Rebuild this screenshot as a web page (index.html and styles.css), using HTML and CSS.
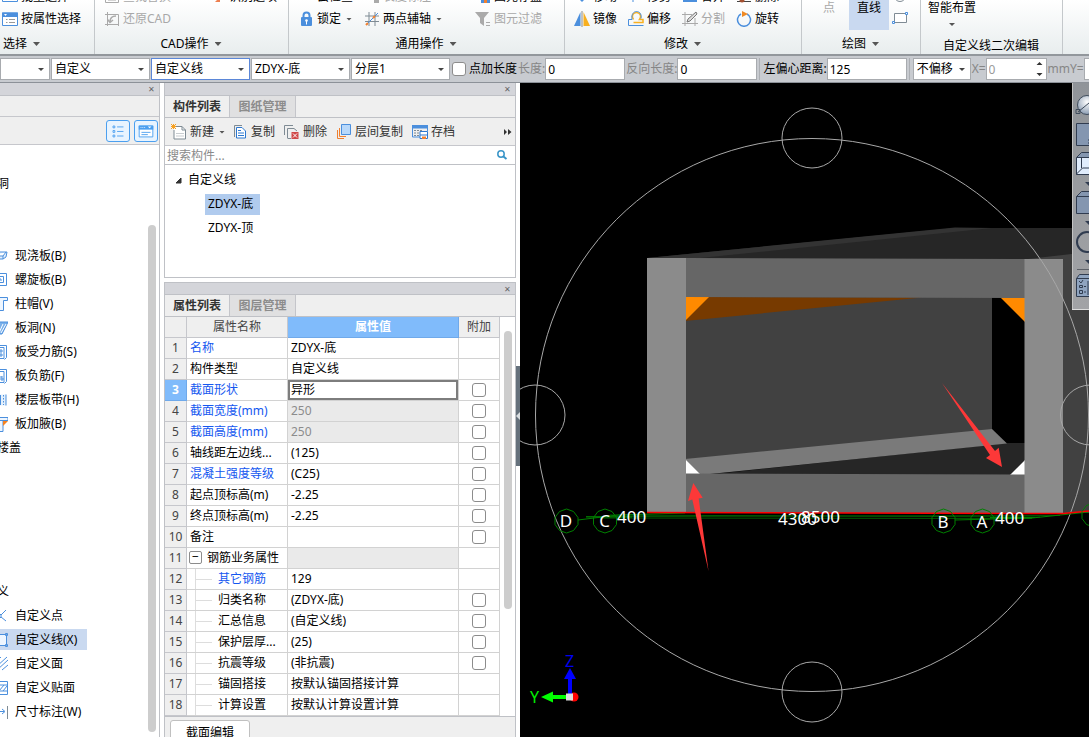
FILE: index.html
```html
<!DOCTYPE html>
<html lang="zh-CN">
<head>
<meta charset="utf-8">
<title>自定义线</title>
<link rel="stylesheet" href="styles.css">
</head>
<body>
<div class="app">
<header class="ribbon">
  <section class="group g-select">
    <div class="tools">
      <button><svg class="ic" viewBox="0 0 16 16"><path d="M.5 1.500h15v11H.5z" fill="#fff" stroke="#4b8fdd"/><path d="M0 1h16v4H0z" fill="#4b8fdd"/></svg>批量选择</button>
      <button><svg class="ic" viewBox="0 0 16 16"><path d="M.5 2h15v12.500H.5z" fill="#fff" stroke="#4b8fdd"/><path d="M0 1.500h16V6H0z" fill="#4b8fdd"/><path d="M2 3h3L3.500 5z" fill="#fff"/><path d="M4 8.500h1.500M7 8.500h6M4 11.500h1.500M7 11.500h6" stroke="#999"/></svg>按属性选择</button>
    </div>
    <button class="caption">选择<i class="arrow"></i></button>
  </section>
  <section class="group g-cad">
    <div class="tools">
      <button disabled><svg class="ic" viewBox="0 0 16 16"><path d="M1.500 2.500h13v11h-13zM4 11h8" fill="none" stroke="#aaa"/></svg>查找替换</button>
      <button><svg class="ic" viewBox="0 0 16 16"><path d="M5 13l5-5v5z" fill="#ee8050"/></svg>识别选项</button>
      <button disabled><svg class="ic" viewBox="0 0 16 16"><path d="M3.500 1v14M1 3.500h13.500V15M1 13.500h14" fill="none" stroke="#aaa"/><path d="M12 5c-4 0-6 2-6 6M3.500 8.500L6 11.500l3-2.500" fill="none" stroke="#aaa" stroke-width="1.500"/></svg>还原CAD</button>
    </div>
    <button class="caption">CAD操作<i class="arrow"></i></button>
  </section>
  <section class="group g-common">
    <div class="tools">
      <button><svg class="ic" viewBox="0 0 16 16"></svg>云检查</button>
      <button disabled><svg class="ic" viewBox="0 0 16 16"><path d="M10 11h5v3h-5z" fill="#aaa"/></svg>长度标注</button>
      <button><svg class="ic" viewBox="0 0 16 16"><path d="M6 2h9v12H6z" fill="#4b8fdd"/><path d="M9 10h3v4H9z" fill="#f08030"/></svg>图元存盘</button>
      <button><svg class="ic" viewBox="0 0 16 16"><path d="M5.500 7V4.500a3 3 0 0 1 6 0V7" fill="none" stroke="#4b8fdd" stroke-width="2"/><rect x="3" y="6" width="11" height="9" rx="1" fill="#4b8fdd"/><circle cx="8.500" cy="9.500" r="1.300" fill="#fff"/><path d="M8 9.500h1v4H8z" fill="#fff"/></svg>锁定<i class="arrow s"></i></button>
      <button><svg class="ic" viewBox="0 0 16 16"><path d="M5 1v14M11 1v14M1 5h14M1 10.500h14" stroke="#7f8b94"/><path d="M2 14L14 2" stroke="#4b8fdd"/><path d="M2 14l2-2M9 7l2-2" stroke="#f08030" stroke-width="2"/></svg>两点辅轴<i class="arrow s"></i></button>
      <button disabled><svg class="ic" viewBox="0 0 16 16"><path d="M0 1h14L9 7v8l-4-3V7z" fill="#aaa"/><path d="M11 11.500h4M11 14.500h4" stroke="#aaa"/></svg>图元过滤</button>
    </div>
    <button class="caption">通用操作<i class="arrow"></i></button>
  </section>
  <section class="group g-modify">
    <div class="tools">
      <button><svg class="ic" viewBox="0 0 16 16"><path d="M4 9h8l-4 4z" fill="#4b8fdd"/></svg>移动</button>
      <button><svg class="ic" viewBox="0 0 16 16"><path d="M5 8v5" stroke="#4b8fdd"/></svg>修剪</button>
      <button><svg class="ic" viewBox="0 0 16 16"><path d="M1 6h14v7H1z" fill="#4b8fdd"/></svg>合并</button>
      <button><svg class="ic" viewBox="0 0 16 16"><path d="M1 12.500h14" stroke="#444"/><circle cx="6" cy="11" r="2.500" fill="#a35030"/></svg>删除</button>
      <button><svg class="ic" viewBox="0 0 16 16"><path d="M6.500 1v14H0z" fill="#4b8fdd"/><path d="M9.500 1v14H16z" fill="#f8b020"/><path d="M8 0v16" stroke="#8a8a8a"/></svg>镜像</button>
      <button><svg class="ic" viewBox="0 0 16 16"><path d="M5.500 8.500C3 5 5 1.500 8.500 1.500S14 5 11.500 8.500h3.500v3H5.500" fill="none" stroke="#f8b020" stroke-width="1.500"/><path d="M4 8.500C3 3 6 .5 8.500.5S14 2.500 13 7.500M4 8.500H.5v6H15.500" fill="none" stroke="#4b8fdd"/></svg>偏移</button>
      <button disabled><svg class="ic" viewBox="0 0 16 16"><path d="M3 1v14M13 7v8M0 3.500h10M0 12.500h16" stroke="#aaa"/><path d="M5 11l1-3 8-7 1 2-7 7z" fill="#ddd" stroke="#777"/></svg>分割</button>
      <button><svg class="ic" viewBox="0 0 16 16"><path d="M5 3a6.500 6.500 0 1 0 6 0" fill="none" stroke="#4b8fdd" stroke-width="1.500"/><path d="M6 0v6l6-3z" fill="#f08a24"/></svg>旋转</button>
    </div>
    <button class="caption">修改<i class="arrow"></i></button>
  </section>
  <section class="group g-draw">
    <div class="shapes">
      <button disabled class="shape">点</button>
      <button class="shape on">直线</button>
      <button class="outline" aria-label="矩形"><svg viewBox="0 0 18 30"><circle cx="9" cy="-4" r="5.500" fill="none" stroke="#7f8b94"/><path d="M3.500 13.500h12v9h-12z" fill="#fff" stroke="#7f8b94"/><path d="M1.500 21.500h2v2h-2zM14.500 12.500h2v2h-2z" fill="#fff" stroke="#4b8fdd"/></svg></button>
    </div>
    <button class="caption">绘图<i class="arrow"></i></button>
  </section>
  <section class="group g-smart">
    <button class="smart">智能布置<i class="arrow s"></i></button>
    <div class="caption low">自定义线二次编辑</div>
  </section>
</header>

<form class="options">
  <select class="w50" aria-label="楼层"><option></option></select>
  <select class="w100" aria-label="构件类别"><option>自定义</option></select>
  <select class="w100 focus" aria-label="构件类型"><option>自定义线</option></select>
  <select class="w100" aria-label="构件"><option>ZDYX-底</option></select>
  <select class="w100" aria-label="分层"><option>分层1</option></select>
  <label class="check"><input type="checkbox">点加长度</label>
  <label class="dim">长度:<input type="text" value="0"></label>
  <label class="dim">反向长度:<input type="text" value="0"></label>
  <label class="sep">左偏心距离:<input type="text" value="125"></label>
  <span class="sep"><select class="w58" aria-label="偏移方式"><option>不偏移</option></select></span>
  <label class="dim">X=<span class="spin"><input type="text" value="0" disabled><svg viewBox="0 0 7 16"><path d="M0.500 4L3.500 1l3 3zM.5 12l3 3 3-3z" fill="#333"/></svg></span></label>
  <label class="dim mm">mmY=<input type="text"></label>
</form>

<main class="work">
<aside class="panel nav">
  <div class="title"><button aria-label="关闭">✕</button></div>
  <div class="blank"></div>
  <div class="views">
    <button aria-label="列表"><svg viewBox="0 0 24 22"><path d="M6.500 5.500h2v2h-2zM6.500 10.500h2v2h-2zM6.500 15.500h2v2h-2z" fill="none" stroke="#4b9fef"/><path d="M11 6.500h7M11 11.500h7M11 16.500h7" stroke="#4b9fef"/></svg></button>
    <button aria-label="图标"><svg viewBox="0 0 24 22"><path d="M4.500 5.500h15v12h-15z" fill="#fff" stroke="#4b9fef"/><path d="M4 5h16v4.500H4z" fill="#4b9fef"/><path d="M6 6.500h1v1H6zM8 6.500h1v1H8zM10 6.500h1v1h-1zM14 6h4l-2 2z" fill="#fff"/><path d="M7 12.500h10M7 15h7" stroke="#4b9fef"/></svg></button>
  </div>
  <div class="scroll">
    <ul class="modules">
      <li class="cat">门窗洞</li>
      <li class="after2"><svg class="ic" viewBox="0 0 16 16"><path d="M0 9l5-5h10l-1 5-3 2H0zM0 8h11l3-4M11 8v3" fill="#e4f0fc" stroke="#4b8fdd"/></svg>现浇板(B)</li>
      <li><svg class="ic" viewBox="0 0 16 16"><path d="M1 1.500h13.500v12H1M4 4.500h7.500v6H6V7h3v2" fill="none" stroke="#4b8fdd"/></svg>螺旋板(B)</li>
      <li><svg class="ic" viewBox="0 0 16 16"><path d="M1 1.500h14.500v3h-4v10h-6v-10H1z" fill="#eef6ff" stroke="#4b8fdd"/></svg>柱帽(V)</li>
      <li><svg class="ic" viewBox="0 0 16 16"><path d="M3 2h13l-6 12H5z" fill="#7ab0ea" stroke="#4b8fdd"/><path d="M11 4l-4 9M14 4l-5 9" stroke="#fff"/></svg>板洞(N)</li>
      <li><svg class="ic" viewBox="0 0 16 16"><path d="M1 3.500h11v11H1M3 1.500h11.500v12l-2 2M5 5v8M9 5v8M3 7h8M3 11h8" fill="none" stroke="#4b8fdd"/></svg>板受力筋(S)</li>
      <li><svg class="ic" viewBox="0 0 16 16"><path d="M1 3.500h11v11H1M3 1.500h11.500v12l-2 2M7 5v4M10 8v5M4 9h6M5 11h7" fill="none" stroke="#4b8fdd"/></svg>板负筋(F)</li>
      <li><svg class="ic" viewBox="0 0 16 16"><path d="M6 2.500h8v11H6z" fill="#e4f0fc"/><path d="M8.500 3v10M14 2.500v11" stroke="#4b8fdd"/><path d="M11.500 3v10" stroke="#4b8fdd" stroke-dasharray="1.500 1.500"/></svg>楼层板带(H)</li>
      <li><svg class="ic" viewBox="0 0 16 16"><path d="M1 1.500h15v3H1zM6 4.500h5v11H6z" fill="#eef6ff" stroke="#4b8fdd"/><path d="M11 5h5l-5 5z" fill="#f58220"/></svg>板加腋(B)</li>
      <li class="cat">空心楼盖</li>
      <li class="cat after5">自定义</li>
      <li><svg class="ic" viewBox="0 0 16 16"><path d="M14 2L9 7M9 9l5 4M6 6.500h3v3H6z" fill="none" stroke="#4b8fdd"/></svg>自定义点</li>
      <li class="on"><svg class="ic" viewBox="0 0 16 16"><path d="M5 2.500h9.500v11H5M13.500 1.500h2v2h-2zM13.500 12.500h2v2h-2z" fill="#eef6ff" stroke="#4b8fdd"/></svg>自定义线(X)</li>
      <li><svg class="ic" viewBox="0 0 16 16"><path d="M4 6l5-5M4 11L15 1M5 14L16 4M10 14l6-5" stroke="#4b8fdd"/></svg>自定义面</li>
      <li><svg class="ic" viewBox="0 0 16 16"><path d="M3 1.500h12.500v13H3M3 5h12M3 11h12M7 11l5-6M11 11l4-5" fill="none" stroke="#4b8fdd"/></svg>自定义贴面</li>
      <li><svg class="ic" viewBox="0 0 16 16"><path d="M3 7.500h9M10 5l3 2.500L10 10" fill="none" stroke="#4b8fdd"/><path d="M15.500 2v13" stroke="#7f8b94"/></svg>尺寸标注(W)</li>
    </ul>
    <div class="bar"></div>
  </div>
</aside>

<div class="stack">
<section class="panel list">
  <div class="title"><button aria-label="关闭">✕</button></div>
  <div class="tabs"><button class="on">构件列表</button><button>图纸管理</button></div>
  <div class="toolbar">
    <button><svg class="ic" viewBox="0 0 16 16"><path d="M5 2.500h6l3.500 3.500v9H3V6" fill="#fff" stroke="#7f8b94"/><path d="M11 2.500V6h3.500" fill="none" stroke="#7f8b94"/><path d="M5 9.500h8M5 12h8" stroke="#c8ccd0"/><path d="M0 0l5 5M5 0L0 5M2.500 0v5M0 2.500h5" stroke="#f8a020"/></svg>新建<i class="arrow s"></i></button>
    <button><svg class="ic" viewBox="0 0 16 16"><path d="M2.500 13V1.500H10" fill="none" stroke="#7f8b94"/><path d="M4.500 3.500H10L13.500 7v7h-9z" fill="#fff" stroke="#2d78d0"/><path d="M6 6.500h3M6 9h6M6 11.500h6" stroke="#2d78d0"/></svg>复制</button>
    <button><svg class="ic" viewBox="0 0 16 16"><path d="M.5 11V1.500H9M3.500 14V4.500H10L13 7" fill="none" stroke="#7f8b94"/><path d="M3.500 14.500H7" stroke="#7f8b94"/><path d="M7.500 8h7v7h-7z" fill="#d04848"/><path d="M9 9.500l4 4M13 9.500l-4 4" stroke="#fff"/></svg>删除</button>
    <button><svg class="ic" viewBox="0 0 16 16"><path d="M5.500.5h9v10h-9z" fill="#b8d8fa" stroke="#4b8fdd"/><path d="M3.500 4v8.500H10M1.500 6v8.500H8" fill="none" stroke="#f08030"/></svg>层间复制</button>
    <button><svg class="ic" viewBox="0 0 16 16"><path d="M.5 2v11H8M15.500 2v5" fill="none" stroke="#4b8fdd"/><path d="M0 1h16v3.500H0z" fill="#4b8fdd"/><path d="M2 6.500h8M2 9h5M2 11.500h5" stroke="#7f8b94" stroke-dasharray="2 1"/><path d="M8 7.500h7.500v7H8z" fill="#fff" stroke="#2d78d0"/><path d="M8 10.500h7v1H8z" fill="#2d78d0"/><path d="M10 12.500h4V15h-4z" fill="#f08030"/></svg>存档</button>
    <button class="more" aria-label="更多"><svg viewBox="0 0 8 8"><path d="M0 1l3 3-3 3zM4 1l3.500 3L4 7z" fill="#333"/></svg></button>
  </div>
  <label class="search"><input type="text" placeholder="搜索构件..." aria-label="搜索构件"><svg viewBox="0 0 12 12"><circle cx="5" cy="5" r="3.200" fill="#fff" stroke="#3a95c8" stroke-width="1.500"/><path d="M7.500 7.500L10.500 10" stroke="#3a95c8" stroke-width="2"/></svg></label>
  <ul class="tree">
    <li class="root"><svg viewBox="0 0 7 7"><path d="M6 1v5H1z" fill="#333" stroke="#333"/></svg>自定义线</li>
    <li><span class="on">ZDYX-底</span></li>
    <li><span>ZDYX-顶</span></li>
  </ul>
</section>

<section class="panel props">
  <div class="title"><button aria-label="关闭">✕</button></div>
  <div class="tabs"><button class="on">属性列表</button><button>图层管理</button></div>
  <div class="sheet">
  <table>
    <colgroup><col class="c1"><col class="c2"><col class="c3"><col class="c4"></colgroup>
    <thead><tr><th></th><th>属性名称</th><th class="sel">属性值</th><th>附加</th></tr></thead>
    <tbody>
    <tr><th>1</th><td class="blue">名称</td><td>ZDYX-底</td><td></td></tr>
    <tr><th>2</th><td>构件类型</td><td>自定义线</td><td></td></tr>
    <tr><th class="sel">3</th><td class="blue">截面形状</td><td class="edit"><input type="text" value="异形" aria-label="截面形状"></td><td><input type="checkbox" aria-label="附加截面形状"></td></tr>
    <tr><th>4</th><td class="blue">截面宽度(mm)</td><td class="off">250</td><td><input type="checkbox" aria-label="附加截面宽度"></td></tr>
    <tr><th>5</th><td class="blue">截面高度(mm)</td><td class="off">250</td><td><input type="checkbox" aria-label="附加截面高度"></td></tr>
    <tr><th>6</th><td>轴线距左边线...</td><td>(125)</td><td><input type="checkbox" aria-label="附加轴线距左边线"></td></tr>
    <tr><th>7</th><td class="blue">混凝土强度等级</td><td>(C25)</td><td><input type="checkbox" aria-label="附加混凝土强度等级"></td></tr>
    <tr><th>8</th><td>起点顶标高(m)</td><td>-2.25</td><td><input type="checkbox" aria-label="附加起点顶标高"></td></tr>
    <tr><th>9</th><td>终点顶标高(m)</td><td>-2.25</td><td><input type="checkbox" aria-label="附加终点顶标高"></td></tr>
    <tr><th>10</th><td>备注</td><td></td><td><input type="checkbox" aria-label="附加备注"></td></tr>
    <tr><th>11</th><td class="fold"><button aria-label="折叠">−</button>钢筋业务属性</td><td class="off"></td><td></td></tr>
    <tr><th>12</th><td class="blue child"><div>其它钢筋</div></td><td>129</td><td></td></tr>
    <tr><th>13</th><td class="child"><div>归类名称</div></td><td>(ZDYX-底)</td><td><input type="checkbox" aria-label="附加归类名称"></td></tr>
    <tr><th>14</th><td class="child"><div>汇总信息</div></td><td>(自定义线)</td><td><input type="checkbox" aria-label="附加汇总信息"></td></tr>
    <tr><th>15</th><td class="child"><div>保护层厚...</div></td><td>(25)</td><td><input type="checkbox" aria-label="附加保护层厚"></td></tr>
    <tr><th>16</th><td class="child"><div>抗震等级</div></td><td>(非抗震)</td><td><input type="checkbox" aria-label="附加抗震等级"></td></tr>
    <tr><th>17</th><td class="child"><div>锚固搭接</div></td><td>按默认锚固搭接计算</td><td></td></tr>
    <tr><th>18</th><td class="child"><div>计算设置</div></td><td>按默认计算设置计算</td><td></td></tr>
    </tbody>
  </table>
  <div class="bar"></div>
  </div>
  <div class="foot"><button>截面编辑</button></div>
</section>
</div>

<div class="gutter"><button aria-label="收起"><svg viewBox="0 0 4 8"><path d="M4 0v8L0 4z" fill="#d8dde0"/></svg></button></div>

<section class="view">
  <svg class="scene" viewBox="520 83 569 654" preserveAspectRatio="xMinYMin slice">
    <path d="M647 258L955 228H1089V262H647z" fill="#262626"/>
    <path d="M647 258L955 227.500L992 228L700 258z" fill="#333"/>
    <path d="M1028 259L1089 252V513H1060z" fill="#414141"/>
    <path d="M685 297H992V430L685 460z" fill="#414141"/>
    <path d="M708 297L922 297.500L685 321z" fill="#773a00"/>
    <path d="M685 296H710L685 321z" fill="#ff8a00"/>
    <path d="M1000 297H1025V322z" fill="#ff8a00"/>
    <path d="M705 475L1007 443H1025V475z" fill="#262626"/>
    <path d="M685 459L992 429L1007 443.500L710 474H685z" fill="#7a7a7a"/>
    <path d="M685 459L700 474H685zM1025 460V475H1010z" fill="#fff"/>
    <path d="M685 258L1025 259V298L685 297zM685 473.500L1025 474.500V513H685z" fill="#666"/>
    <path d="M647 258H686V513H647zM1024.500 259H1063V513H1024.500z" fill="#8b8b8b"/>
    <g fill="none" stroke="#a8a8a8">
      <circle cx="812" cy="415" r="276.500"/>
      <circle cx="812" cy="138" r="30"/><circle cx="812" cy="692" r="30"/>
      <circle cx="535" cy="415" r="30"/><circle cx="1090.500" cy="415" r="30"/>
    </g>
    <g fill="none">
      <path d="M586 516.500L1060 515.500M600 518L1032 518.500M610 515L1040 517" stroke="#005a00"/>
      <path d="M578 520L618 515L685 513M586 517H632M955 520L1032 518L1089 512M990 517.500H1035" stroke="#008000"/>
      <path d="M647 512.500L1063 513.500L1089 511" stroke="#f00" stroke-width="1.500"/>
      <g stroke="#008000">
        <path id="node" d="M566.500 509l7 2.500 4.500 6v7l-4.500 6-7 2.500-7-2.500-4.500-6v-7l4.500-6z"/>
        <use href="#node" x="38.500"/><use href="#node" x="377"/><use href="#node" x="416"/><use href="#node" x="527" y="-6"/>
      </g>
    </g>
    <g class="mark">
      <text x="566" y="527" text-anchor="middle">D</text><text x="604.500" y="527" text-anchor="middle">C</text>
      <text x="943" y="528" text-anchor="middle">B</text><text x="982" y="528" text-anchor="middle">A</text>
      <text x="617" y="523">400</text><text x="778" y="525">4300</text><text x="801" y="523">8500</text><text x="995" y="524">400</text>
    </g>
    <path d="M942 383L995 451L998.700 447.700L1002 467L986 458L990 455zM693.300 483L702.700 497.700L698.700 498.500L708.500 571L692.300 499.500L688 501z" fill="#fd3838"/>
    <circle cx="574" cy="697" r="4.500" fill="#f00"/>
    <path d="M568 697V679H564L570 668L576 679H572V697z" fill="#00f"/>
    <path d="M568 695H553V691.500L541 697L553 702.500V699H568z" fill="#0f0"/>
    <path d="M566 693.500h7v7h-7z" fill="#ddd"/>
    <text class="axis" x="565" y="667" fill="#0000f0">Z</text><text class="axis" x="530" y="703" fill="#00f000">Y</text>
  </svg>
  <div class="navbar">
    <svg viewBox="0 0 17 227">
      <defs><radialGradient id="ball" cx=".5" cy=".35" r=".6"><stop offset="0" stop-color="#fff"/><stop offset="1" stop-color="#94a4b8"/></radialGradient></defs>
      <circle cx="15" cy="22" r="9.500" fill="url(#ball)" stroke="#3f4c5c"/><path d="M6 29l11-9M4 26.500h4v4H4z" fill="none" stroke="#3f4c5c"/>
      <path d="M4.500 40.500h20v22h-20z" fill="#8496b0" stroke="#303c50"/><path d="M16 57h1M16 60h1" stroke="#303c50"/>
      <path d="M4.500 74.500l5-5h10v22h-15z" fill="#8496b0" stroke="#303c50"/><path d="M4.500 74.500h15v17h-15z" fill="#e0ecfc" stroke="#303c50"/><path d="M4.500 91l6-6h8M9.500 75v10" fill="none" stroke="#303c50"/>
      <path d="M13 99h8l-4 4zM13 138h8l-4 4zM13 177h8l-4 4z" fill="#303c50"/>
      <path d="M4.500 113.500l5-5h12v22h-17z" fill="#8496b0" stroke="#303c50"/><path d="M4.500 113.500h17" stroke="#303c50"/>
      <circle cx="15" cy="159" r="10" fill="none" stroke="#303c50" stroke-width="2"/>
      <path d="M5 186.500h12" stroke="#5c6068"/>
      <path d="M4.500 195.500l3-4h14v22h-17z" fill="#8fa4c0" stroke="#303c50"/><path d="M4.500 195.500h17M7 198l2 2 2-3M7.500 202.500h3v2h-3zM7.500 207.500h3v3h-3zM12 203.500h2M12 209h2M16 198v14" fill="none" stroke="#303c50"/>
    </svg>
  </div>
</section>
</main>
</div>
</body>
</html>
```
FILE: styles.css
```css
* { box-sizing: border-box; }
body { margin: 0; background: #fff; color: #000; font: 12px/20px "Noto Sans", "Noto Sans CJK SC", sans-serif; }
button, input, select { margin: 0; padding: 0; border: 0; border-radius: 0; background: none; color: inherit; font: inherit; }
ul { list-style: none; margin: 0; padding: 0; }
svg { display: block; flex: none; }
.ic { width: 16px; height: 16px; }
.app { height: 100vh; display: flex; flex-direction: column; overflow: hidden; }
.arrow { display: inline-block; flex: none; width: 7px; height: 4px; margin-left: 6px; background: #555; clip-path: polygon(0 0, 100% 0, 50% 100%); }
.arrow.s { width: 6px; height: 3px; margin-left: 5px; }

/* ribbon */
.ribbon { flex: none; height: 56px; display: flex; overflow: hidden; background: linear-gradient(#fff, #e8edee); border-bottom: 2px solid #92979c; }
.group { flex: none; height: 54px; padding-right: 1px; display: flex; flex-direction: column; justify-content: flex-end; border-right: 1px solid #c4c8cb; white-space: nowrap; }
.tools { display: grid; grid-auto-rows: 22px; padding-left: 9px; }
.tools button { display: flex; align-items: center; gap: 3px; text-align: left; }
.tools .arrow.s { margin-left: 2px; }
.ribbon button:disabled { color: #a8a8a8; }
.caption { height: 20px; display: flex; align-items: center; justify-content: center; margin-top: 4px; }
.g-select { width: 95px; }
.g-select .tools { padding-left: 2px; }
.g-select .caption { justify-content: flex-start; padding-left: 3px; }
.g-cad { width: 194px; }
.g-cad .tools { grid-template-columns: 106px auto; }
.g-common { width: 276px; }
.g-common .tools { grid-template-columns: 66px 111px auto; }
.g-modify { width: 237px; }
.g-modify .tools { grid-template-columns: repeat(4, 54px); }
.g-draw { width: 119px; }
.g-smart { width: 142px; }
.shapes { display: flex; height: 30px; padding-left: 7px; }
.shape { width: 40px; padding-bottom: 14px; line-height: 16px; }
.shape.on { background: #c9d9f0; }
.outline svg { width: 18px; height: 30px; margin-left: 2px; overflow: visible; }
.group .shapes + .caption { margin-top: 4px; }
.smart { align-self: flex-start; width: 48px; margin-left: 7px; display: flex; flex-direction: column; align-items: center; line-height: 18px; margin-bottom: 12px; }
.smart .arrow.s { margin: 6px 0 0; }
.caption.low { margin-top: 0; line-height: 16px; height: 16px; }

/* options */
.options { flex: none; height: 27px; display: flex; align-items: center; gap: 1px; background: #c8cbd0; border-bottom: 1px solid #8c9198; white-space: nowrap; overflow: hidden; }
.options > * { flex: none; }
.options select, .options input[type=text] { height: 22px; background-color: #fff; border: 1px solid #a8abaf; padding: 0 3px; }
.options input[type=text] { width: 80px; padding: 0 2px; }
.options select { appearance: none; background-image: url("data:image/svg+xml,%3Csvg xmlns='http://www.w3.org/2000/svg' width='6' height='3'%3E%3Cpath d='M0 0h6L3 3z' fill='%23444'/%3E%3C/svg%3E"); background-repeat: no-repeat; background-position: right 5px center; }
.options .focus { border-color: #5b87d8; }
.w50 { width: 50px; }
.w100 { width: 99px; }
.w58 { width: 58px; }
.options label { display: flex; align-items: center; }
.options .check { margin-left: 1px; gap: 3px; }
.dim { color: #868686; }
.dim input { color: #000; }
.dim input:disabled { color: #9a9a9a; }
.options .sep { margin-left: 1px; padding-left: 3px; border-left: 1px solid #acafb4; display: flex; }
.spin { position: relative; }
.options .spin input { width: 61px; }
.spin svg { position: absolute; right: 4px; top: 3px; width: 7px; height: 16px; }
.check input, td input[type=checkbox] { appearance: none; width: 14px; height: 14px; border: 1px solid #8c8c8c; border-radius: 3px; background: #fff; }

/* panels */
.work { flex: 1; min-height: 0; display: flex; }
.panel { border: 1px solid #bfc1c6; border-top: 0; }
.title { height: 13px; background: #d4d5da; border-bottom: 1px solid #bfc1c6; display: flex; justify-content: flex-end; }
.title button { width: 16px; font-size: 8px; line-height: 12px; color: #666; }
.nav { flex: none; width: 160px; margin-right: 4px; display: flex; flex-direction: column; border-left: 0; border-bottom: 0; }
.blank { height: 21px; background: #efefef; border-bottom: 1px solid #c6c7cc; }
.views { height: 28px; display: flex; justify-content: flex-end; align-items: center; gap: 4px; padding-right: 1px; background: #efefef; border-bottom: 1px solid #c6c7cc; }
.views button { width: 24px; height: 22px; border: 1px solid #4b9fef; border-radius: 3px; background: #e8f4ff; }
.views svg { width: 22px; height: 20px; }
.scroll { flex: 1; min-height: 0; display: flex; overflow: hidden; }
.modules { flex: 1; margin-left: -27px; padding-top: 28px; }
.modules li { width: 114px; height: 21px; margin-bottom: 3px; padding-left: 19px; display: flex; align-items: center; gap: 7px; white-space: nowrap; }
.modules .cat { padding-left: 0; }
.modules .after2 { margin-top: 51px; }
.modules .after5 { margin-top: 123px; }
.modules .on { background: #c9d9f0; }
.bar { width: 8px; border-radius: 4px; background: #cdcdcd; }
.nav .bar { margin: 80px 3px 5px 0; }
.stack { flex: none; width: 352px; display: flex; flex-direction: column; gap: 4px; }
.tabs { height: 22px; display: flex; background: #efefef; border-bottom: 1px solid #bfc1c6; }
.tabs button { width: 66px; font-weight: bold; color: #8c8c8c; background: #e0e0e1; border-right: 1px solid #c4c5ca; }
.tabs .on { width: 65px; color: #333; background: #efefef; }
.toolbar { height: 28px; display: flex; align-items: center; gap: 9px; padding: 1px 3px 0 6px; background: #efefef; border-bottom: 1px solid #c6c7cc; color: #333; }
.toolbar button { display: flex; align-items: center; gap: 3px; white-space: nowrap; }
.toolbar .arrow.s { margin: 0 -2px 0 2px; }
.toolbar .more { margin-left: auto; }
.more svg { width: 8px; height: 8px; }
.search { height: 19px; display: flex; align-items: center; padding-right: 7px; border-bottom: 1px solid #bfc1c6; }
.search input { flex: 1; height: 18px; padding: 2px 0 0 2px; outline: 0; }
.search input::placeholder { color: #8a8a8a; opacity: 1; }
.search svg { width: 12px; height: 12px; }
.tree { height: 112px; padding-top: 3px; }
.tree li { height: 24px; padding-left: 40px; display: flex; align-items: center; }
.tree .root { padding-left: 10px; gap: 6px; }
.tree .root svg { width: 7px; height: 7px; }
.tree span { min-width: 55px; height: 21px; padding: 0 3px; }
.tree .on { background: #b0cbee; }

/* properties */
.props { flex: 1; min-height: 0; display: flex; flex-direction: column; border-top: 1px solid #bfc1c6; border-bottom: 0; }
.props .title { height: 12px; }
.props .tabs { flex: none; }
.sheet { display: flex; gap: 4px; border-bottom: 1px solid #bfc1c6; }
.sheet .bar { margin: 14px 0 107px; }
table { width: 335px; table-layout: fixed; border-collapse: separate; border-spacing: 0; }
.c1 { width: 22px; } .c2 { width: 101px; } .c3 { width: 171px; } .c4 { width: 41px; }
th, td { height: 21px; padding: 0 0 0 3px; border: solid #d2d2d2; border-width: 0 1px 1px 0; line-height: 20px; white-space: nowrap; overflow: hidden; text-align: left; }
th { padding: 0; font-weight: normal; text-align: center; color: #444; background: #efefef; border-color: #c6c7cc; }
td:last-child { padding: 0; text-align: center; }
td input[type=checkbox] { display: block; margin: 0 auto; }
th.sel { background: #80bbfb; color: #fff; font-weight: bold; border-color: #6fa9ea; }
.blue { color: #1457f0; }
.off { background: #eaeaea; color: #8c8c8c; }
.edit { padding: 0; }
.edit input { display: block; width: 100%; height: 20px; padding-left: 1px; border: 2px solid #7d7d7d; }
.fold { padding-left: 2px; }
.fold button { width: 13px; height: 13px; margin-right: 5px; border: 1px solid #8c8c8c; border-radius: 2px; line-height: 10px; vertical-align: 1px; }
.child { padding-left: 8px; }
.child div { display: flex; align-items: center; gap: 6px; border-left: 1px solid #ddd; }
.child div::before { content: ""; width: 16px; height: 1px; background: #ddd; }
.foot { flex: 1; padding: 3px 5px 0; background: #efefef; overflow: hidden; }
.foot button { width: 80px; height: 26px; background: #fff; border: 1px solid #c0c0c0; border-radius: 3px; }

/* viewport */
.gutter { flex: none; width: 4px; padding-top: 283px; background: #fff; }
.gutter button { display: flex; align-items: center; width: 4px; height: 100px; background: #65717c; }
.gutter svg { width: 4px; height: 8px; }
.view { flex: 1; min-width: 0; position: relative; overflow: hidden; background: #000; }
.scene { width: 100%; height: 100%; }
.mark { font-size: 17px; fill: #fff; }
.axis { font-size: 16px; }
.navbar { position: absolute; top: 0; right: 0; width: 17px; height: 227px; background: linear-gradient(#909499, #a2a3a6); border-bottom: 1px solid #ddd; box-shadow: inset 1px 0 #c4c4c4; }
```
